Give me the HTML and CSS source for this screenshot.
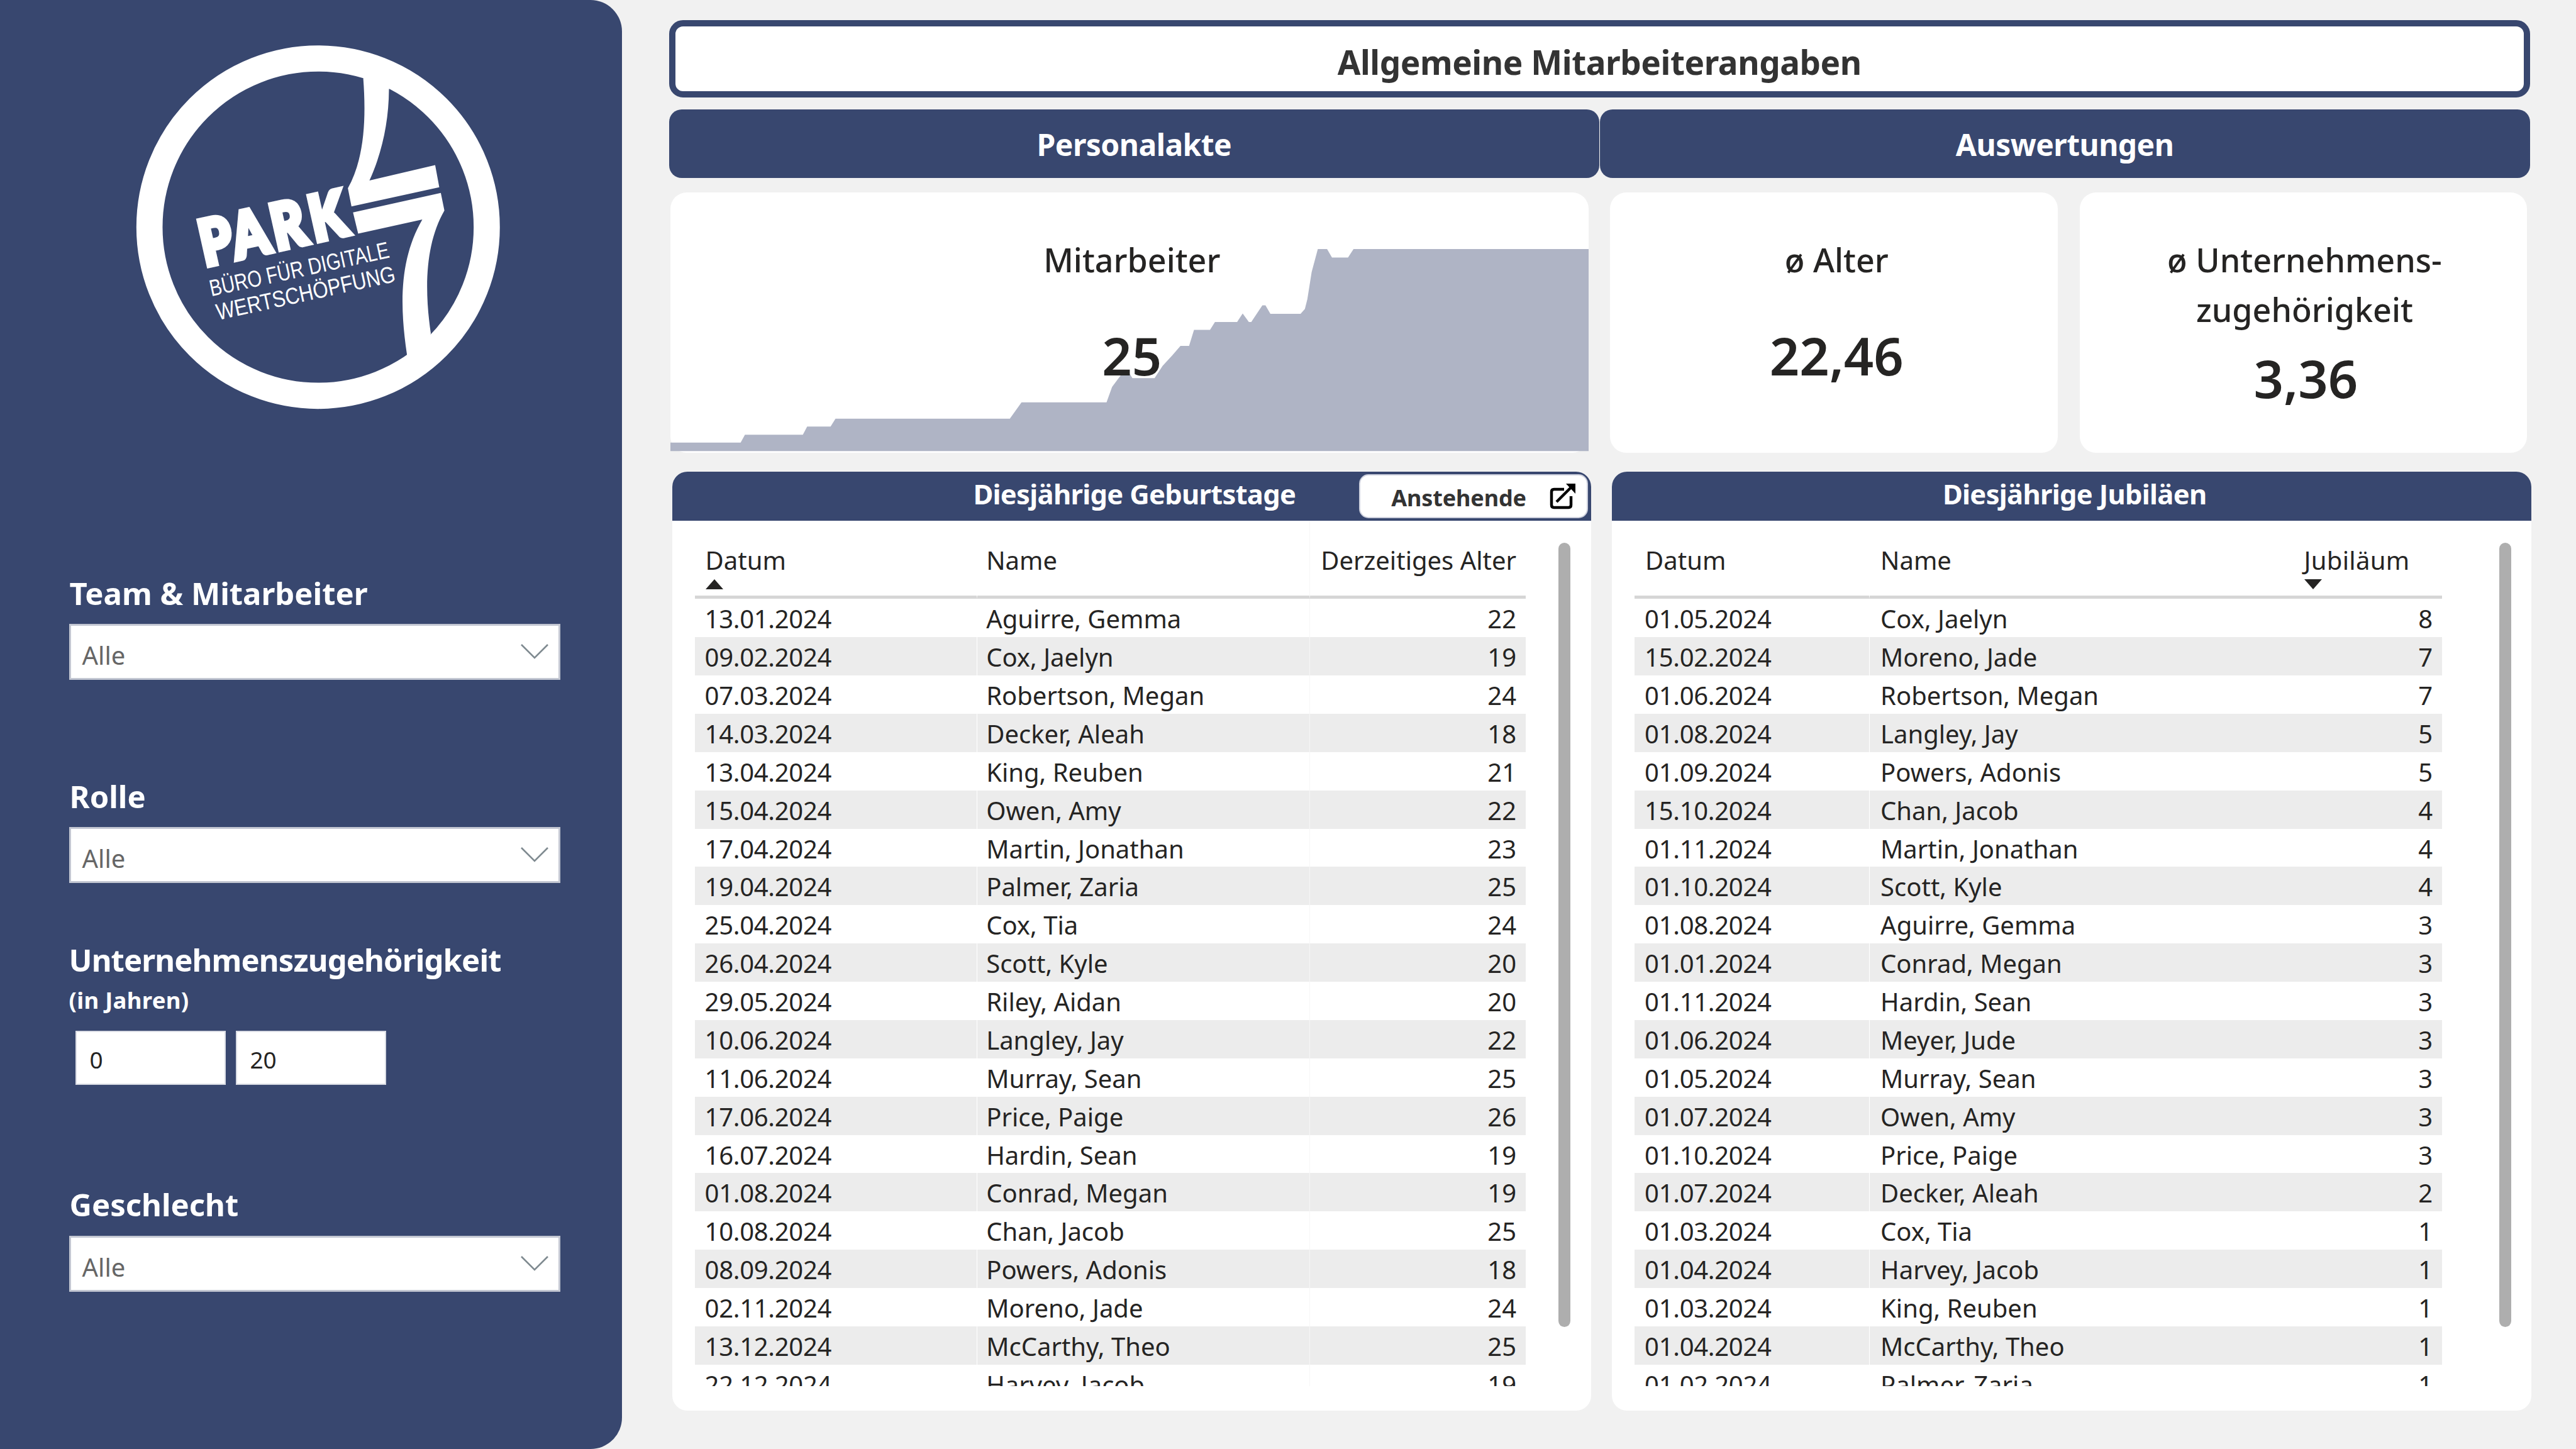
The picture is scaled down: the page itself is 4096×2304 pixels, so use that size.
FILE: index.html
```html
<!DOCTYPE html>
<html lang="de">
<head>
<meta charset="utf-8">
<title>Allgemeine Mitarbeiterangaben</title>
<link rel="stylesheet" href="styles.css">
</head>
<body>
<aside class="sidebar">
  <svg class="logo" viewBox="0 0 1568 1568" role="img" aria-label="Park 7">
    <circle cx="786" cy="779.5" r="657" fill="none" stroke="#fff" stroke-width="102"/>
    <path fill="#fff" d="M962 202 L970 140 L1080 180 L1062 243 C1061 370 1035 490 986 598 L1242 538 L1258 624 L916 699 L902 628 C968 510 973 350 962 202 Z"/>
    <path fill="#fff" d="M922 722 L1264 646 L1278 715 C1206 840 1198 1010 1225 1193 L1200 1320 L1125 1320 L1132 1275 C1102 1075 1105 900 1192 750 L942 805 Z"/>
    <text class="logo-name" transform="translate(348 931) rotate(-12.6) scale(.82 1)" x="-3 152 345 532">PARK</text>
    <text class="logo-sub" transform="translate(370 1049) rotate(-12.3)" textLength="714" lengthAdjust="spacingAndGlyphs">BÜRO FÜR DIGITALE</text>
    <text class="logo-sub" transform="translate(396 1142) rotate(-12.3)" textLength="712" lengthAdjust="spacingAndGlyphs">WERTSCHÖPFUNG</text>
  </svg>
  <section class="field field-team">
    <h2 class="label">Team &amp; Mitarbeiter</h2>
    <div class="select"><span>Alle</span><svg class="chevron" viewBox="0 0 44 26"><path d="M1 2 L22 23 L43 2"/></svg></div>
  </section>
  <section class="field field-role">
    <h2 class="label">Rolle</h2>
    <div class="select"><span>Alle</span><svg class="chevron" viewBox="0 0 44 26"><path d="M1 2 L22 23 L43 2"/></svg></div>
  </section>
  <section class="field field-tenure">
    <h2 class="label label-long">Unternehmenszugehörigkeit</h2>
    <p class="hint">(in Jahren)</p>
    <div class="range"><div class="number">0</div><div class="number">20</div></div>
  </section>
  <section class="field field-gender">
    <h2 class="label">Geschlecht</h2>
    <div class="select"><span>Alle</span><svg class="chevron" viewBox="0 0 44 26"><path d="M1 2 L22 23 L43 2"/></svg></div>
  </section>
</aside>
<main class="main">
  <h1 class="title">Allgemeine Mitarbeiterangaben</h1>
  <nav class="tabs"><div class="tab">Personalakte</div><div class="tab">Auswertungen</div></nav>
  <div class="cards">
    <section class="card">
      <svg class="trend" viewBox="28 637 1491 860" preserveAspectRatio="none"><path d="M28 1464 H142 L149 1438 H243 L250 1411 H288 L296 1385 H579 L598 1331 H736 L745 1280 L757 1247 L764 1228 L771 1228 L778 1251 H814 L827 1210 L843 1175 L856 1144 H870 L878 1091 H904 L912 1065 H948 L957 1037 L967 1065 H971 L989 1010 H994 L1002 1038 H1051 L1058 1022 L1062 990 L1069 900 L1079 824 H1094 L1102 852 H1128 L1137 824 H1519 V1492 H28 Z"/></svg>
      <div class="kpi"><div class="kpi-label">Mitarbeiter</div><div class="kpi-value">25</div></div>
    </section>
    <section class="card"><div class="kpi"><div class="kpi-label">ø Alter</div><div class="kpi-value">22,46</div></div></section>
    <section class="card"><div class="kpi kpi-tight"><div class="kpi-label">ø Unternehmens-<br>zugehörigkeit</div><div class="kpi-value">3,36</div></div></section>
  </div>
  <div class="panels">
    <section class="panel">
      <header class="panel-head"><h2>Diesjährige Geburtstage</h2>
        <div class="link-button"><span>Anstehende</span>
          <svg class="open-icon" viewBox="0 0 42 42"><path d="M23 10 H7 Q3 10 3 14 V35 Q3 39 7 39 H30 Q34 39 34 35 V21 M11 30 L34 7"/><path class="tip" d="M26 1 H41 V17 Z"/></svg></div>
      </header>
      <div class="panel-body">
        <div class="table births">
          <div class="thead"><div>Datum<i class="up"></i></div><div>Name</div><div>Derzeitiges Alter</div></div>
          <div class="tbody">
            <div class="row"><div>13.01.2024</div><div>Aguirre, Gemma</div><div>22</div></div>
            <div class="row"><div>09.02.2024</div><div>Cox, Jaelyn</div><div>19</div></div>
            <div class="row"><div>07.03.2024</div><div>Robertson, Megan</div><div>24</div></div>
            <div class="row"><div>14.03.2024</div><div>Decker, Aleah</div><div>18</div></div>
            <div class="row"><div>13.04.2024</div><div>King, Reuben</div><div>21</div></div>
            <div class="row"><div>15.04.2024</div><div>Owen, Amy</div><div>22</div></div>
            <div class="row"><div>17.04.2024</div><div>Martin, Jonathan</div><div>23</div></div>
            <div class="row"><div>19.04.2024</div><div>Palmer, Zaria</div><div>25</div></div>
            <div class="row"><div>25.04.2024</div><div>Cox, Tia</div><div>24</div></div>
            <div class="row"><div>26.04.2024</div><div>Scott, Kyle</div><div>20</div></div>
            <div class="row"><div>29.05.2024</div><div>Riley, Aidan</div><div>20</div></div>
            <div class="row"><div>10.06.2024</div><div>Langley, Jay</div><div>22</div></div>
            <div class="row"><div>11.06.2024</div><div>Murray, Sean</div><div>25</div></div>
            <div class="row"><div>17.06.2024</div><div>Price, Paige</div><div>26</div></div>
            <div class="row"><div>16.07.2024</div><div>Hardin, Sean</div><div>19</div></div>
            <div class="row"><div>01.08.2024</div><div>Conrad, Megan</div><div>19</div></div>
            <div class="row"><div>10.08.2024</div><div>Chan, Jacob</div><div>25</div></div>
            <div class="row"><div>08.09.2024</div><div>Powers, Adonis</div><div>18</div></div>
            <div class="row"><div>02.11.2024</div><div>Moreno, Jade</div><div>24</div></div>
            <div class="row"><div>13.12.2024</div><div>McCarthy, Theo</div><div>25</div></div>
            <div class="row"><div>22.12.2024</div><div>Harvey, Jacob</div><div>19</div></div>
          </div>
        </div>
        <div class="scrollbar"></div>
      </div>
    </section>
    <section class="panel">
      <header class="panel-head"><h2>Diesjährige Jubiläen</h2></header>
      <div class="panel-body">
        <div class="table jubilees">
          <div class="thead"><div>Datum</div><div>Name</div><div>Jubiläum<i class="down"></i></div></div>
          <div class="tbody">
            <div class="row"><div>01.05.2024</div><div>Cox, Jaelyn</div><div>8</div></div>
            <div class="row"><div>15.02.2024</div><div>Moreno, Jade</div><div>7</div></div>
            <div class="row"><div>01.06.2024</div><div>Robertson, Megan</div><div>7</div></div>
            <div class="row"><div>01.08.2024</div><div>Langley, Jay</div><div>5</div></div>
            <div class="row"><div>01.09.2024</div><div>Powers, Adonis</div><div>5</div></div>
            <div class="row"><div>15.10.2024</div><div>Chan, Jacob</div><div>4</div></div>
            <div class="row"><div>01.11.2024</div><div>Martin, Jonathan</div><div>4</div></div>
            <div class="row"><div>01.10.2024</div><div>Scott, Kyle</div><div>4</div></div>
            <div class="row"><div>01.08.2024</div><div>Aguirre, Gemma</div><div>3</div></div>
            <div class="row"><div>01.01.2024</div><div>Conrad, Megan</div><div>3</div></div>
            <div class="row"><div>01.11.2024</div><div>Hardin, Sean</div><div>3</div></div>
            <div class="row"><div>01.06.2024</div><div>Meyer, Jude</div><div>3</div></div>
            <div class="row"><div>01.05.2024</div><div>Murray, Sean</div><div>3</div></div>
            <div class="row"><div>01.07.2024</div><div>Owen, Amy</div><div>3</div></div>
            <div class="row"><div>01.10.2024</div><div>Price, Paige</div><div>3</div></div>
            <div class="row"><div>01.07.2024</div><div>Decker, Aleah</div><div>2</div></div>
            <div class="row"><div>01.03.2024</div><div>Cox, Tia</div><div>1</div></div>
            <div class="row"><div>01.04.2024</div><div>Harvey, Jacob</div><div>1</div></div>
            <div class="row"><div>01.03.2024</div><div>King, Reuben</div><div>1</div></div>
            <div class="row"><div>01.04.2024</div><div>McCarthy, Theo</div><div>1</div></div>
            <div class="row"><div>01.02.2024</div><div>Palmer, Zaria</div><div>1</div></div>
          </div>
        </div>
        <div class="scrollbar"></div>
      </div>
    </section>
  </div>
</main>
</body>
</html>
```
FILE: styles.css
```css
:root { --navy: #38476f; --ink: #252423; }
* { box-sizing: border-box; }
body, h1, h2, p { margin: 0; }
body {
  width: 4096px; height: 2304px; overflow: hidden;
  display: flex; background: #f1f1f1; color: var(--ink);
  font-family: "Noto Sans", "Open Sans", sans-serif; font-size: 40px;
}

/* Sidebar */
.sidebar {
  flex: none; width: 988.5px; height: 2304px; padding: 42.7px 98px 0 109.5px;
  background: var(--navy); border-radius: 0 50px 50px 0;
}
.logo { display: block; width: 640px; height: 640px; margin-left: 75.4px; }
.logo-name { font: 900 244px Lato, sans-serif; fill: #fff; stroke: #fff; stroke-width: 22px; }
.logo-sub { font: 400 90px "Liberation Sans", Arial, sans-serif; fill: #fff; }
.field-team { margin-top: 230.8px; }
.field-role { margin-top: 155.4px; }
.field-tenure { margin-top: 92.3px; }
.field-gender { margin-top: 160px; }
.label { padding-left: 1px; font-size: 49px; line-height: 60px; font-weight: 700; letter-spacing: 0; color: #fff; white-space: nowrap; }
.label-long { padding-left: 0; letter-spacing: -.9px; }
.hint { margin-top: 10.8px; font-size: 36.5px; line-height: 46px; font-weight: 700; letter-spacing: .3px; color: #fff; }
.select {
  display: flex; justify-content: space-between; align-items: center;
  height: 89px; margin-top: 18.5px; padding: 0 16px 0 18px;
  background: #fff; border: 3px solid #c3c7d2; color: #666;
}
.field-gender .select { margin-top: 20px; }
.select span { padding-top: 11px; }
.chevron { width: 44px; height: 26px; }
.chevron path { fill: none; stroke: #7f8a90; stroke-width: 2.6; }
.range { display: flex; gap: 16.7px; margin: 25.7px 0 0 10.9px; }
.number {
  width: 238.3px; height: 86px; padding: 6px 0 0 20px; line-height: 76px;
  background: #fff; border: 2px solid #d9dce4; font-size: 37px;
}

/* Header area */
.main { width: 2958.5px; margin-left: 75.5px; padding-top: 32px; flex: none; }
.title {
  height: 123px; padding-top: 10px; border: 10px solid var(--navy); border-radius: 22px; background: #fff;
  color: #333; font-size: 53px; line-height: 93px; font-weight: 700; letter-spacing: -.45px; text-align: center;
}
.tabs { display: flex; gap: 1px; margin-top: 19px; }
.tab {
  flex: 1; height: 109px; padding-top: 3px; border-radius: 20px; background: var(--navy); color: #fff;
  font-size: 48px; line-height: 106px; font-weight: 700; letter-spacing: -.55px; text-align: center;
}

/* Key figures */
.cards { display: grid; grid-template-columns: 1460.4px 711.8px 711.7px; gap: 34.4px; margin: 23px 0 0 1.6px; }
.card { display: grid; height: 413.7px; background: #fff; border-radius: 26px; }
.trend, .kpi { grid-area: 1 / 1; }
.trend { width: 100%; height: 413.7px; fill: #afb4c5; }
.kpi { padding: 67px 0 0 8px; text-align: center; position: relative; }
.kpi-label { font-size: 52px; line-height: 79.3px; font-weight: 500; }
.kpi-value { margin-top: 55px; font-size: 83px; line-height: 116px; font-weight: 600; }
.kpi-tight { padding-left: 4px; }
.kpi-tight .kpi-value { margin-top: 11px; padding-left: 4px; }

/* Panels */
.panels { display: grid; grid-template-columns: 1460.7px 1461.5px; gap: 33.8px; margin: 30.3px 0 0 5px; }
.panel { height: 1493.5px; background: #fff; border-radius: 24px; overflow: hidden; }
.panel-head { position: relative; height: 78px; background: var(--navy); }
.panel-head h2 {
  padding-left: 9px; color: #fff; font-size: 43.5px; line-height: 71px; font-weight: 700; letter-spacing: -.7px; text-align: center;
}
.link-button {
  position: absolute; top: 4.5px; right: 5px; width: 363.4px; height: 69.5px; padding: 0 17px 0 49px;
  display: flex; justify-content: space-between; align-items: center; background: #fff;
  border: 2px solid #cdd0dd; border-radius: 15px;
  color: #333; font-size: 36px; font-weight: 700; letter-spacing: -.15px;
}
.link-button span { padding-top: 4px; }
.open-icon { width: 42px; height: 42px; fill: none; stroke: #000; stroke-width: 4.5; }
.open-icon .tip { fill: #000; stroke: none; }
.panel-body { display: flex; }
.table { margin-left: 35.6px; }
.thead, .row { display: grid; }
.births .thead, .births .row { grid-template-columns: 448.6px 529px 343.9px; }
.jubilees .thead, .jubilees .row { grid-template-columns: 373px 671.5px 239.5px; }
.thead { height: 124.3px; }
.thead > div { padding: 33px 15px 0 17px; line-height: 60px; border-bottom: 5px solid #d6d6d6; white-space: nowrap; }
.thead > :nth-child(2), .row > :nth-child(2) { border-left: 1px solid #fff; }
.births .thead > :last-child { text-align: right; }
.births .thead > :last-child, .births .row > :last-child { border-left: 1px solid #f6f6f6; }
.births .thead > :nth-child(2), .births .row > :nth-child(2) { padding-left: 14px; }
.jubilees .thead > :last-child { padding-left: 20px; letter-spacing: .3px; }
.up, .down { display: block; width: 0; border: 0 solid transparent; border-width: 0 14px; }
.up { border-bottom: 16px solid var(--ink); }
.down { border-top: 16px solid var(--ink); }
.tbody { height: 1251.4px; overflow: hidden; }
.row { height: 60.88px; }
.row > div { padding: 3px 15px 0 17px; height: 60.88px; line-height: 57.88px; white-space: nowrap; }
.row > :first-child { letter-spacing: -.3px; padding-left: 16px; }
.row > :last-child { text-align: right; }
.row:nth-child(even) { background: #ececec; }
.scrollbar { width: 19.5px; height: 1247px; margin: 35px 0 0 51.5px; border-radius: 10px; background: #aeaeae; }
.jubilees + .scrollbar { margin-left: 90.5px; }
```
